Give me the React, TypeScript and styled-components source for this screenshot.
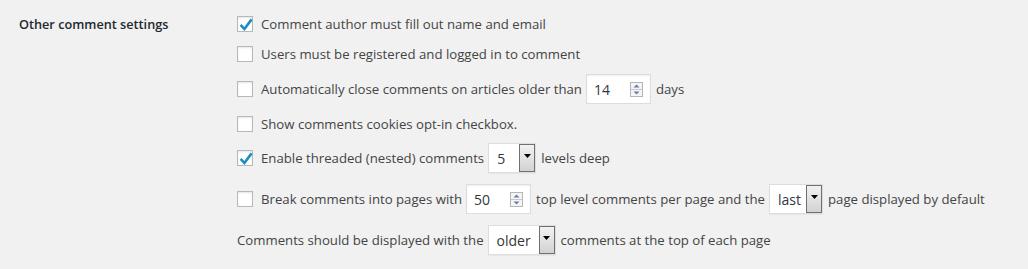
import React, { FC } from 'react';
import styled, { createGlobalStyle } from 'styled-components';

const GlobalStyle = createGlobalStyle`
  html, body {
    margin: 0;
    padding: 0;
    background: #f1f1f1;
  }
  body {
    font-family: "Segoe UI", "Open Sans", "Noto Sans", sans-serif;
    font-size: 13.2px;
    color: #444;
  }
`;

const FormTable = styled.div`
  display: grid;
  grid-template-columns: 218px 1fr;
  padding: 9px 0 0 19px;
`;

const Th = styled.div`
  font-weight: 600;
  font-size: 12.7px;
  color: #23282d;
  line-height: 30px;
  height: 30px;
`;

const Fieldset = styled.div`
  display: flex;
  flex-direction: column;
`;

const Row = styled.div<{ $h: number }>`
  display: flex;
  align-items: center;
  height: ${(p) => p.$h}px;
  white-space: nowrap;
`;

const Box = styled.span`
  position: relative;
  display: inline-block;
  width: 16px;
  height: 16px;
  box-sizing: border-box;
  border: 1px solid #b4b9be;
  background: #fff;
  box-shadow: inset 0 1px 2px rgba(0, 0, 0, 0.1);
  margin-right: 8px;
  flex: none;
  svg {
    position: absolute;
    left: -1px;
    top: -1px;
  }
`;

const NumberBox = styled.span`
  display: inline-flex;
  align-items: center;
  justify-content: space-between;
  box-sizing: border-box;
  width: 65px;
  height: 30px;
  margin: 0 5px 0 4px;
  padding: 0 7px 0 7px;
  border: 1px solid #ddd;
  background: #fff;
  box-shadow: inset 0 1px 2px rgba(0, 0, 0, 0.07);
  color: #32373c;
  font-size: 14px;
`;

const SelectBox = styled.span<{ $w: number }>`
  display: inline-flex;
  box-sizing: border-box;
  width: ${(p) => p.$w}px;
  height: 30px;
  margin: 0 5px 0 4px;
  border: 1px solid #ddd;
  background: #fff;
  box-shadow: 0 1px 1px rgba(0, 0, 0, 0.04);
  color: #32373c;
  font-size: 14px;
`;

const SelectValue = styled.span`
  flex: 1;
  padding-left: 8px;
  line-height: 29px;
`;

const ArrowButton = styled.span`
  display: flex;
  justify-content: center;
  padding-top: 9px;
  box-sizing: border-box;
  width: 16px;
  border: 1px solid #707070;
  background: linear-gradient(#f2f2f2, #d2d2d2);
  flex: none;
`;

const Check: FC<{ checked?: boolean }> = ({ checked }) => (
  <Box>
    {checked && (
      <svg width="18" height="18" viewBox="0 0 18 18">
        <polyline
          points="3.6,8.8 7.4,13 14.6,3.4"
          fill="none"
          stroke="#1e8cbe"
          strokeWidth="2.6"
        />
      </svg>
    )}
  </Box>
);

const Spinner = () => (
  <svg width="13" height="15" viewBox="0 0 13 15">
    <rect x="0.5" y="0.5" width="12" height="14" fill="#f4f4f4" stroke="#b5b5b5" />
    <line x1="1" y1="7.5" x2="12" y2="7.5" stroke="#c8c8c8" />
    <polygon points="3.5,5.5 9.5,5.5 6.5,2.5" fill="#6e7aa6" />
    <polygon points="3.5,9.5 9.5,9.5 6.5,12.5" fill="#6e7aa6" />
  </svg>
);

const NumberInput: FC<{ value: string }> = ({ value }) => (
  <NumberBox>
    <span>{value}</span>
    <Spinner />
  </NumberBox>
);

const Select: FC<{ value: string; w: number }> = ({ value, w }) => (
  <SelectBox $w={w}>
    <SelectValue>{value}</SelectValue>
    <ArrowButton>
      <svg width="7" height="4" viewBox="0 0 7 4">
        <polygon points="0,0 7,0 3.5,4" fill="#000" />
      </svg>
    </ArrowButton>
  </SelectBox>
);

const App = () => (
  <>
    <GlobalStyle />
    <FormTable>
      <Th>Other comment settings</Th>
      <Fieldset>
        <Row $h={30}>
          <Check checked />
          Comment author must fill out name and email
        </Row>
        <Row $h={30}>
          <Check />
          Users must be registered and logged in to comment
        </Row>
        <Row $h={40}>
          <Check />
          Automatically close comments on articles older than
          <NumberInput value="14" />
          days
        </Row>
        <Row $h={30}>
          <Check />
          Show comments cookies opt-in checkbox.
        </Row>
        <Row $h={38}>
          <Check checked />
          Enable threaded (nested) comments
          <Select value="5" w={48} />
          levels deep
        </Row>
        <Row $h={44}>
          <Check />
          Break comments into pages with
          <NumberInput value="50" />
          top level comments per page and the
          <Select value="last" w={54} />
          page displayed by default
        </Row>
        <Row $h={38}>
          Comments should be displayed with the
          <Select value="older" w={68} />
          comments at the top of each page
        </Row>
      </Fieldset>
    </FormTable>
  </>
);

export default App;
